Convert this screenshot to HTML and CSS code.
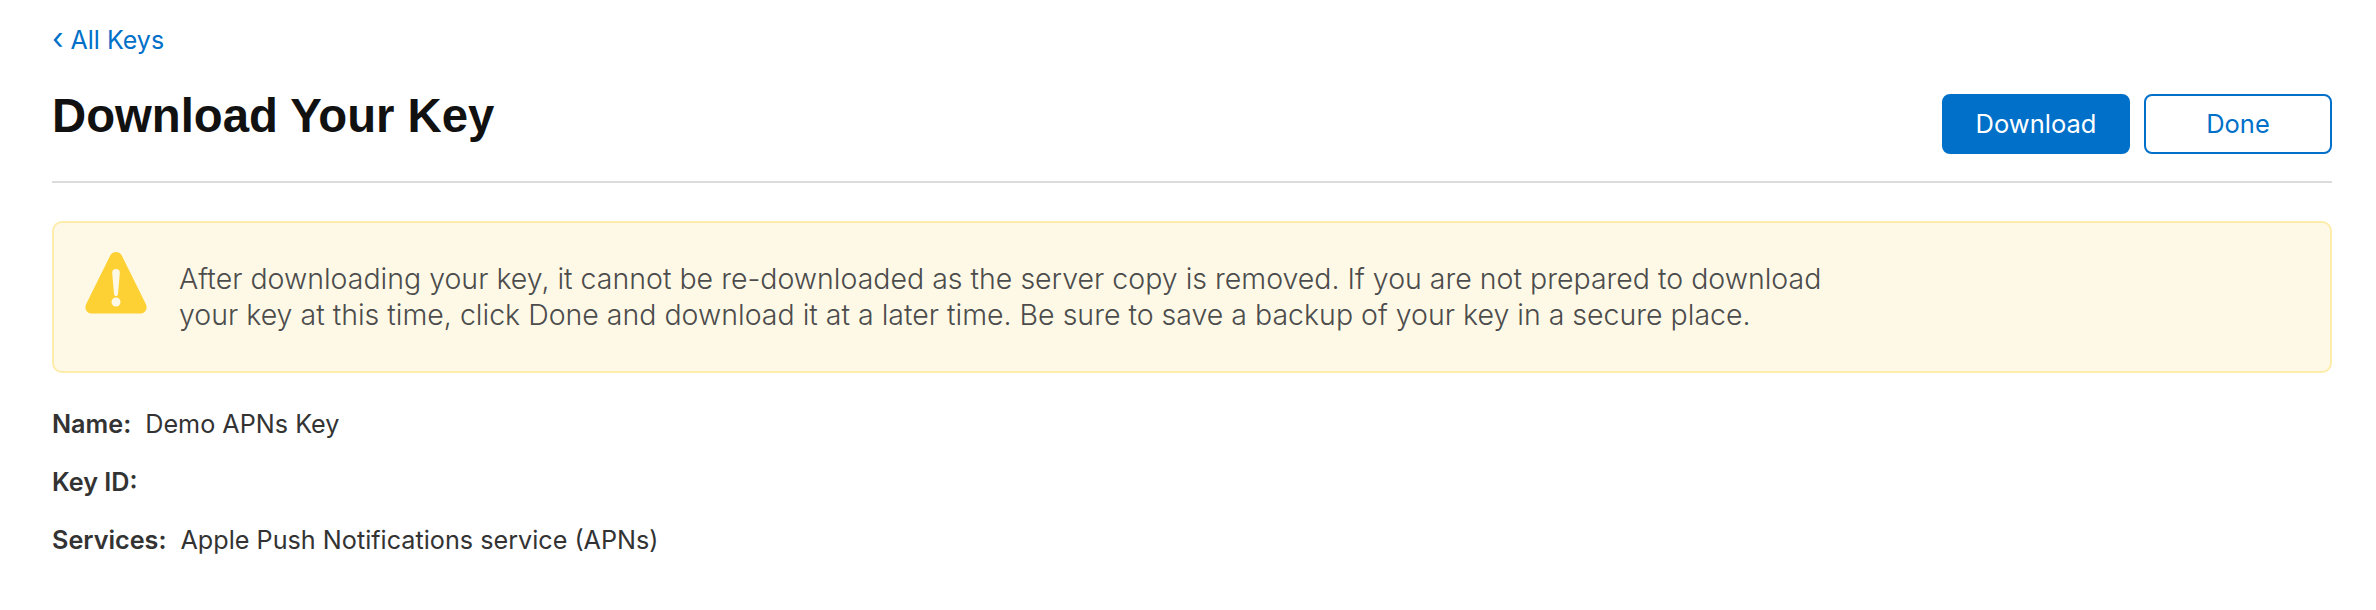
FILE: index.html
```html
<!DOCTYPE html>
<html>
<head>
<meta charset="utf-8">
<title>Download Your Key</title>
<link rel="stylesheet" href="styles.css">
</head>
<body>
<a class="back" href="#"><span class="chev">‹</span> All Keys</a>
<div class="head">
  <h1>Download Your Key</h1>
  <div class="btns">
    <button class="btn primary">Download</button>
    <button class="btn">Done</button>
  </div>
</div>
<div class="alert">
  <svg class="warn" width="62" height="63" viewBox="0 0 62 63">
    <path fill="#fdd033" d="M25.500 4C28 0 34 0 36.500 4L60.800 53C63 58 60 62.500 56 62.500H6C2 62.500 -1 58 1.200 53Z"/>
    <path fill="#fef9e6" d="M31 18C33.500 18 35 19.500 34.800 22L33 43C32.900 44.500 32 45 31 45C30 45 29.100 44.500 29 43L27.200 22C27 19.500 28.500 18 31 18Z"/>
    <circle fill="#fef9e6" cx="31" cy="51" r="4.500"/>
  </svg>
  <p>After downloading your key, it cannot be re-downloaded as the server copy is removed. If you are not prepared to download<br>your key at this time, click Done and download it at a later time. Be sure to save a backup of your key in a secure place.</p>
</div>
<div class="info">
  <p><b>Name:</b>Demo APNs Key</p>
  <p><b>Key ID:</b></p>
  <p><b>Services:</b>Apple Push Notifications service (APNs)</p>
</div>
</body>
</html>
```

FILE: styles.css
```css
body {
  margin: 0;
  padding: 24px 44px 0 52px;
  background: #fff;
  font-family: Inter, "Liberation Sans", sans-serif;
  color: #333;
}
.back {
  display: block;
  height: 32px;
  font-size: 25px;
  line-height: 32px;
  color: #0070c9;
  text-decoration: none;
}
.chev { font-size: 30px; line-height: 24px; }
.head {
  display: flex;
  justify-content: space-between;
  height: 127px;
  padding-top: 38px;
  box-sizing: border-box;
  border-bottom: 2px solid #dcdcdc;
}
h1 {
  margin: -6px 0 0;
  font-family: "Liberation Sans", sans-serif;
  font-size: 47.300px;
  line-height: 56px;
  font-weight: bold;
  color: #111;
}
.btns { display: flex; gap: 14px; align-self: flex-start; }
.btn {
  width: 188px;
  height: 60px;
  padding: 0 0 2px;
  border: 2px solid #0070c9;
  border-radius: 8px;
  background: #fff;
  color: #0070c9;
  font-family: Inter, sans-serif;
  font-size: 25.500px;
}
.primary { background: #0070c9; color: #fff; }
.alert {
  display: flex;
  align-items: center;
  gap: 32px;
  height: 152px;
  box-sizing: border-box;
  margin-top: 38px;
  padding: 0 30px 0 31px;
  background: #fef9e6;
  border: 2px solid #feecaa;
  border-radius: 10px;
}
.warn { flex: none; align-self: flex-start; margin-top: 28px; }
.alert p {
  margin: 0;
  font-size: 28.500px;
  font-weight: 300;
  line-height: 36px;
  color: #4c4c4c;
}
.info { margin-top: 36px; font-size: 25.200px; }
.info p { margin: 0 0 28px; line-height: 30px; }
.info b { font-weight: 600; margin-right: 14px; }
```
